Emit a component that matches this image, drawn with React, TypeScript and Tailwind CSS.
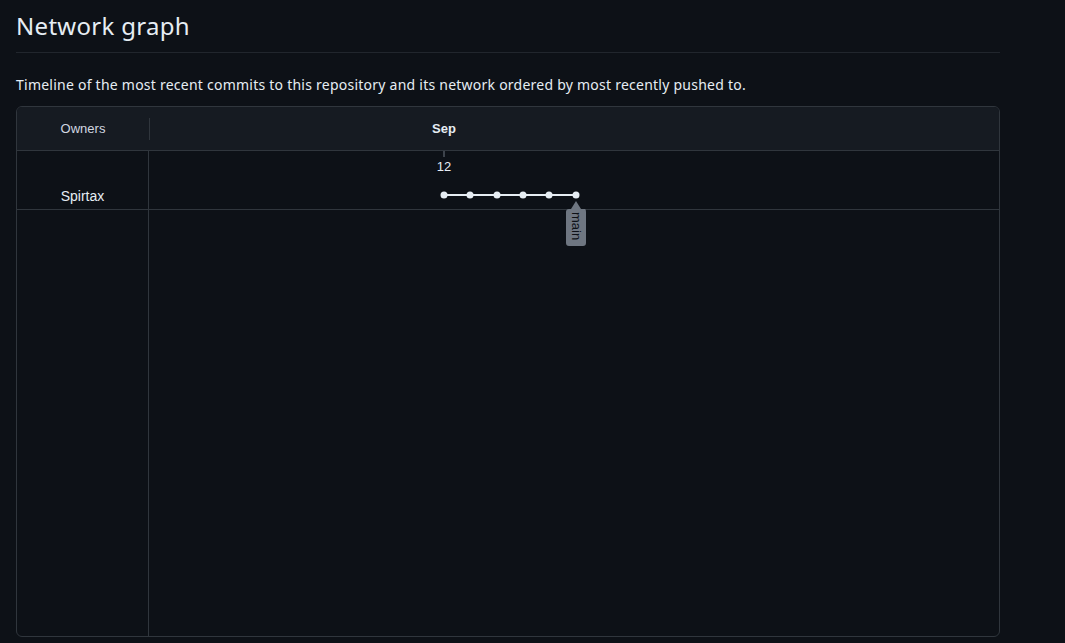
const commits = [295, 321, 348, 374, 400, 427];

function Graph() {
  const y = 44;
  return (
    <svg className="absolute left-0 top-0 overflow-visible" width="851" height="100">
      <line x1="295" y1="0" x2="295" y2="6" stroke="#6e7681" strokeWidth="1" />
      <text x="295" y="20" textAnchor="middle" fill="#e6edf3" fontSize="13" fontFamily="'Liberation Sans', Arial, sans-serif">
        12
      </text>
      <line x1={commits[0]} y1={y} x2={commits[commits.length - 1]} y2={y} stroke="#e6edf3" strokeWidth="2" />
      {commits.map((x) => (
        <circle key={x} cx={x} cy={y} r="3.5" fill="#e6edf3" />
      ))}
      <path d="M427 50 L432 58 L436 58 Q437 58 437 61 L437 92 Q437 95 434 95 L420 95 Q417 95 417 92 L417 61 Q417 58 420 58 L422 58 Z" fill="#6e7681" />
      <text
        x="0"
        y="0"
        transform="translate(422.5 61) rotate(90)"
        fill="#0d1117"
        fontSize="13"
        fontFamily="'Liberation Sans', Arial, sans-serif"
      >
        main
      </text>
    </svg>
  );
}

export default function App() {
  return (
    <div className="min-h-[643px] bg-[#0d1117] font-['Liberation_Sans',Arial,sans-serif] text-[#e6edf3]">
      <div className="ml-4 w-[984px]">
        <h2 className="border-b border-[#21262d] pt-2 pb-2 font-['Noto_Sans',sans-serif] text-[24px] leading-[36px] font-normal tracking-[0.3px]">
          Network graph
        </h2>
        <p className="mt-[21px] mb-[11px] font-['Noto_Sans',sans-serif] text-[14px] leading-[21px] tracking-[0.24px]">
          Timeline of the most recent commits to this repository and its network ordered by most recently pushed to.
        </p>

        <div className="flex h-[531px] flex-col overflow-hidden rounded-md border border-[#30363d] bg-[#0d1117]">
          <div className="flex h-[44px] shrink-0 items-center border-b border-[#30363d] bg-[#161b22] text-[13px]">
            <div className="flex h-full w-[132px] items-center justify-center text-[#d1d7e0]">Owners</div>
            <div className="h-[22px] w-px bg-[#30363d]" />
            <div className="relative h-full flex-1">
              <span className="absolute top-[12px] left-[294px] -translate-x-1/2 font-bold text-[#e6edf3]">Sep</span>
            </div>
          </div>

          <div className="flex h-[59px] shrink-0 border-b border-[#30363d]">
            <div className="flex w-[132px] items-end justify-center border-r border-[#30363d] pb-[2px] text-[14px] text-[#e6edf3]">
              Spirtax
            </div>
            <div className="relative flex-1">
              <Graph />
            </div>
          </div>

          <div className="flex flex-1">
            <div className="w-[132px] border-r border-[#30363d]" />
            <div className="flex-1" />
          </div>
        </div>
      </div>
    </div>
  );
}
